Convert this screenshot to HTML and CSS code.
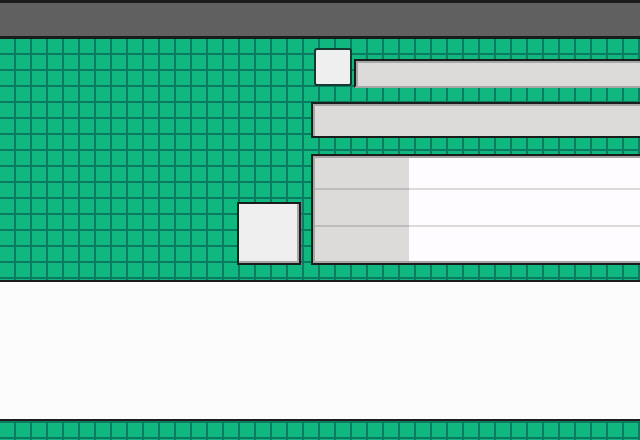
FILE: index.html
```html
<!DOCTYPE html>
<html lang="en">
<head>
<meta charset="utf-8">
<title>Wireframe</title>
<link rel="stylesheet" href="styles.css">
</head>
<body>
  <header class="topbar"></header>
  <main class="stage">
    <div class="tile tile-large"></div>
    <div class="panel">
      <div class="panel-row">
        <div class="tile tile-small"></div>
        <div class="field field-short"></div>
      </div>
      <div class="field field-wide"></div>
      <div class="table">
        <div class="table-row row-1"><div class="cell-key"></div><div class="cell-val"></div></div>
        <div class="table-row row-2"><div class="cell-key"></div><div class="cell-val"></div></div>
        <div class="table-row row-3"><div class="cell-key"></div><div class="cell-val"></div></div>
      </div>
    </div>
  </main>
  <section class="canvas"></section>
</body>
</html>
```
FILE: styles.css
```css
html {
  height: 100%;
  background-color: #10b77f;
  background-image:
    linear-gradient(to right, transparent 14px, #0a7a60 14px),
    linear-gradient(to bottom, transparent 14px, #0a7a60 14px);
  background-size: 16px 16px;
  background-position: 0 7px;
}

body {
  margin: 0;
  height: 440px;
  overflow: hidden;
}

.topbar {
  height: 33px;
  background: #606060;
  border-top: 3px solid #1c1c1c;
  border-bottom: 3px solid #1c1c1c;
}

.stage {
  height: 217px;
  padding: 9px 0 15px 237px;
  display: flex;
  align-items: flex-end;
  gap: 10px;
  overflow: hidden;
}

.tile {
  flex: none;
  box-sizing: border-box;
  background: #efefef;
}

.tile-large {
  width: 64px;
  height: 63px;
  border: 2px solid #1c1c1c;
  box-shadow: inset -2px -2px 0 #a6a6a6;
}

.panel {
  flex: none;
  width: 380px;
  display: flex;
  flex-direction: column;
}

.panel-row {
  height: 40px;
  padding-left: 3px;
  display: flex;
  align-items: flex-start;
  gap: 2px;
}

.tile-small {
  width: 38px;
  height: 38px;
  border: 2px solid #143a32;
  border-radius: 3px;
}

.field {
  box-sizing: border-box;
  background: #dcdbda;
  box-shadow: inset 2px 2px 0 #a6a6a6;
}

.field-short {
  flex: 1;
  margin-top: 11px;
  height: 29px;
  border-top: 2px solid #1c1c1c;
  border-left: 2px solid #1c1c1c;
  border-bottom: 2px solid #a6a6a6;
}

.field-wide {
  margin-top: 14px;
  height: 36px;
  border: 2px solid #1c1c1c;
  border-right: none;
}

.table {
  position: relative;
  margin-top: 16px;
  height: 111px;
  box-sizing: border-box;
  border: 2px solid #1c1c1c;
  border-right: none;
  background: #fefcfe;
  display: flex;
  flex-direction: column;
}

.table::after {
  content: "";
  position: absolute;
  inset: 0;
  box-shadow: inset 2px 2px 0 #a6a6a6, inset 0 -2px 0 #a6a6a6;
  pointer-events: none;
}

.table-row {
  display: flex;
}

.row-1 { height: 34px; }
.row-2 { height: 37px; }
.row-3 { flex: 1; }

.cell-key {
  flex: none;
  width: 96px;
  box-sizing: border-box;
  background: #dcdbda;
  border-bottom: 2px solid #bdbcbc;
}

.cell-val {
  flex: 1;
  box-sizing: border-box;
  border-bottom: 2px solid #dcdbda;
}

.row-3 .cell-key,
.row-3 .cell-val {
  border-bottom: none;
}

.canvas {
  height: 137px;
  background: #fdfcfd;
  border-top: 2px solid #1c1c1c;
  border-bottom: 2px solid #1c1c1c;
}
```
